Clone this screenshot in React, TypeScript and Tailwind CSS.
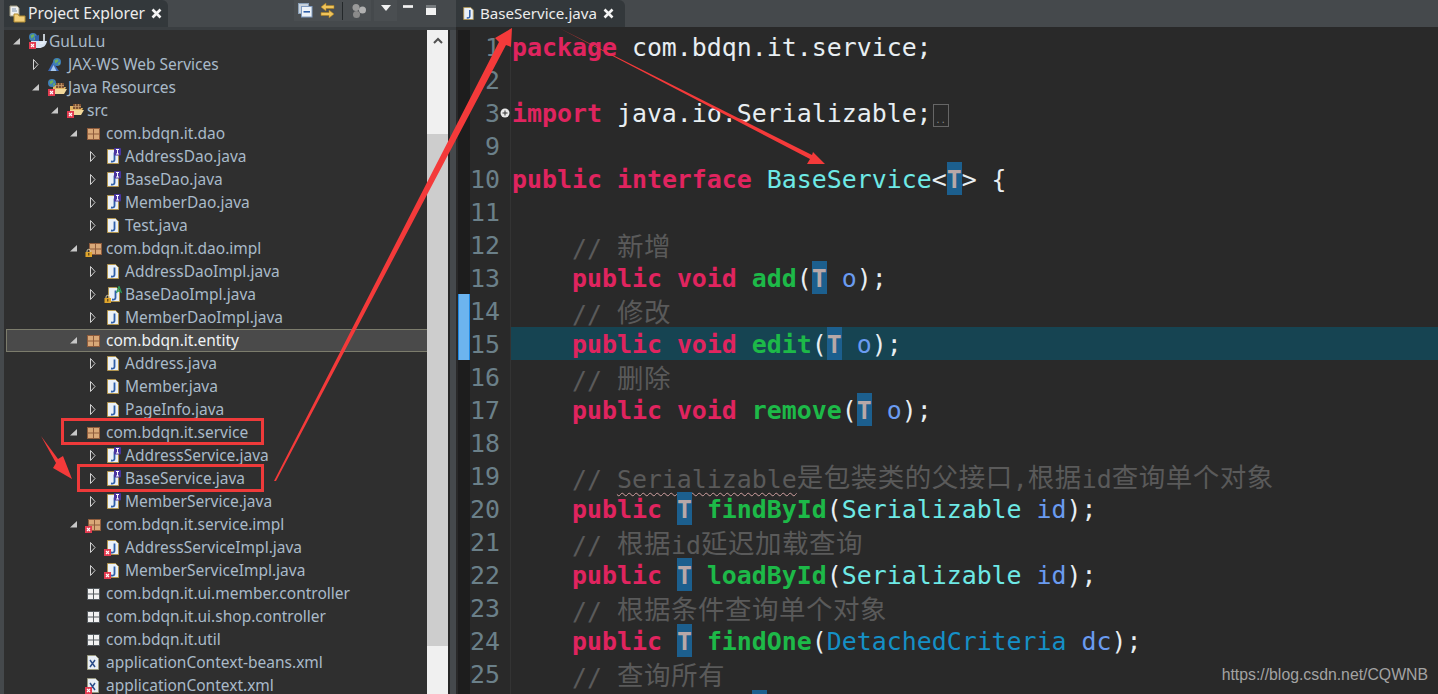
import { ReactNode } from 'react';

type IconKind = 'project' | 'jax' | 'jres' | 'src' | 'pkg' | 'pkgLock' | 'pkgErr' | 'pkgEmpty' | 'file' | 'fileI' | 'fileLockA' | 'fileErr' | 'xml' | 'xmlErr';
type TreeRow = { label: string; depth: number; arrow?: 'open' | 'closed'; icon: IconKind; selected?: boolean };

const depthClass = ['pl-[6px]', 'pl-[25px]', 'pl-[44px]', 'pl-[63px]', 'pl-[82px]'];

const rows: TreeRow[] = [
  { label: 'GuLuLu', depth: 0, arrow: 'open', icon: 'project' },
  { label: 'JAX-WS Web Services', depth: 1, arrow: 'closed', icon: 'jax' },
  { label: 'Java Resources', depth: 1, arrow: 'open', icon: 'jres' },
  { label: 'src', depth: 2, arrow: 'open', icon: 'src' },
  { label: 'com.bdqn.it.dao', depth: 3, arrow: 'open', icon: 'pkg' },
  { label: 'AddressDao.java', depth: 4, arrow: 'closed', icon: 'fileI' },
  { label: 'BaseDao.java', depth: 4, arrow: 'closed', icon: 'fileI' },
  { label: 'MemberDao.java', depth: 4, arrow: 'closed', icon: 'fileI' },
  { label: 'Test.java', depth: 4, arrow: 'closed', icon: 'file' },
  { label: 'com.bdqn.it.dao.impl', depth: 3, arrow: 'open', icon: 'pkgLock' },
  { label: 'AddressDaoImpl.java', depth: 4, arrow: 'closed', icon: 'file' },
  { label: 'BaseDaoImpl.java', depth: 4, arrow: 'closed', icon: 'fileLockA' },
  { label: 'MemberDaoImpl.java', depth: 4, arrow: 'closed', icon: 'file' },
  { label: 'com.bdqn.it.entity', depth: 3, arrow: 'open', icon: 'pkg', selected: true },
  { label: 'Address.java', depth: 4, arrow: 'closed', icon: 'file' },
  { label: 'Member.java', depth: 4, arrow: 'closed', icon: 'file' },
  { label: 'PageInfo.java', depth: 4, arrow: 'closed', icon: 'file' },
  { label: 'com.bdqn.it.service', depth: 3, arrow: 'open', icon: 'pkg' },
  { label: 'AddressService.java', depth: 4, arrow: 'closed', icon: 'fileI' },
  { label: 'BaseService.java', depth: 4, arrow: 'closed', icon: 'fileI' },
  { label: 'MemberService.java', depth: 4, arrow: 'closed', icon: 'fileI' },
  { label: 'com.bdqn.it.service.impl', depth: 3, arrow: 'open', icon: 'pkgErr' },
  { label: 'AddressServiceImpl.java', depth: 4, arrow: 'closed', icon: 'fileErr' },
  { label: 'MemberServiceImpl.java', depth: 4, arrow: 'closed', icon: 'fileErr' },
  { label: 'com.bdqn.it.ui.member.controller', depth: 3, icon: 'pkgEmpty' },
  { label: 'com.bdqn.it.ui.shop.controller', depth: 3, icon: 'pkgEmpty' },
  { label: 'com.bdqn.it.util', depth: 3, icon: 'pkgEmpty' },
  { label: 'applicationContext-beans.xml', depth: 3, icon: 'xml' },
  { label: 'applicationContext.xml', depth: 3, icon: 'xmlErr' },
];

// k keyword, m method, t type, c comment, p param, d dark blue type, w plain, g generic T
type Token = [string, 'k' | 'm' | 't' | 'c' | 'p' | 'd' | 'w' | 'g' | 'z' | 'u' | 'f'];

const tokenClass = {
  k: 'font-bold text-[#e0245f]',
  m: 'font-bold text-[#1db948]',
  t: 'text-[#6ee9e6]',
  c: 'text-[#5a5a5a]',
  p: 'text-[#6a9bf0]',
  d: 'text-[#1590c6]',
  w: 'text-[#e8eef2]',
  g: 'inline-block w-[15px] h-[33px] bg-[#1c5f8e] font-bold text-[#b8a8a8]',
  z: 'text-[#5a5a5a] text-[26.5px] leading-[33px] tracking-[0.5px] align-[1px] [font-family:"Noto_Sans_CJK_SC",sans-serif]',
  u: 'text-[#5a5a5a] underline decoration-wavy decoration-1 decoration-[#cfa0a0] underline-offset-4',
  f: 'inline-block w-[16px] h-[23px] ml-px align-middle border border-[#666666] text-[9px] leading-[30px] text-center text-[#888888]',
};

const code: { n: number; tokens: Token[]; active?: boolean; fold?: boolean; mark?: boolean }[] = [
  { n: 1, tokens: [['package', 'k'], [' com.bdqn.it.service;', 'w']] },
  { n: 2, tokens: [] },
  { n: 3, fold: true, tokens: [['import', 'k'], [' java.io.Serializable;', 'w'], ['..', 'f']] },
  { n: 9, tokens: [] },
  { n: 10, tokens: [['public', 'k'], [' ', 'w'], ['interface', 'k'], [' ', 'w'], ['BaseService', 't'], ['<', 'w'], ['T', 'g'], ['> {', 'w']] },
  { n: 11, tokens: [] },
  { n: 12, tokens: [['    // ', 'c'], ['新增', 'z']] },
  { n: 13, tokens: [['    ', 'w'], ['public', 'k'], [' ', 'w'], ['void', 'k'], [' ', 'w'], ['add', 'm'], ['(', 'w'], ['T', 'g'], [' ', 'w'], ['o', 'p'], [');', 'w']] },
  { n: 14, mark: true, tokens: [['    // ', 'c'], ['修改', 'z']] },
  { n: 15, mark: true, active: true, tokens: [['    ', 'w'], ['public', 'k'], [' ', 'w'], ['void', 'k'], [' ', 'w'], ['edit', 'm'], ['(', 'w'], ['T', 'g'], [' ', 'w'], ['o', 'p'], [');', 'w']] },
  { n: 16, tokens: [['    // ', 'c'], ['删除', 'z']] },
  { n: 17, tokens: [['    ', 'w'], ['public', 'k'], [' ', 'w'], ['void', 'k'], [' ', 'w'], ['remove', 'm'], ['(', 'w'], ['T', 'g'], [' ', 'w'], ['o', 'p'], [');', 'w']] },
  { n: 18, tokens: [] },
  { n: 19, tokens: [['    // ', 'c'], ['Serializable', 'u'], ['是包装类的父接口', 'z'], [',', 'c'], ['根据', 'z'], ['id', 'c'], ['查询单个对象', 'z']] },
  { n: 20, tokens: [['    ', 'w'], ['public', 'k'], [' ', 'w'], ['T', 'g'], [' ', 'w'], ['findById', 'm'], ['(', 'w'], ['Serializable', 't'], [' ', 'w'], ['id', 'p'], [');', 'w']] },
  { n: 21, tokens: [['    // ', 'c'], ['根据', 'z'], ['id', 'c'], ['延迟加载查询', 'z']] },
  { n: 22, tokens: [['    ', 'w'], ['public', 'k'], [' ', 'w'], ['T', 'g'], [' ', 'w'], ['loadById', 'm'], ['(', 'w'], ['Serializable', 't'], [' ', 'w'], ['id', 'p'], [');', 'w']] },
  { n: 23, tokens: [['    // ', 'c'], ['根据条件查询单个对象', 'z']] },
  { n: 24, tokens: [['    ', 'w'], ['public', 'k'], [' ', 'w'], ['T', 'g'], [' ', 'w'], ['findOne', 'm'], ['(', 'w'], ['DetachedCriteria', 'd'], [' ', 'w'], ['dc', 'p'], [');', 'w']] },
  { n: 25, tokens: [['    // ', 'c'], ['查询所有', 'z']] },
  { n: 26, tokens: [['    ', 'w'], ['public', 'k'], [' List<', 'w'], ['T', 'g'], ['> ', 'w'], ['findAll', 'm'], ['();', 'w']] },
];

function ErrBadge({ x, y }: { x: number; y: number }) {
  return (
    <g transform={`translate(${x} ${y})`}>
      <rect width="7" height="7" fill="#e23b50" />
      <path d="M2 2l3 3M5 2l-3 3" stroke="#fff" strokeWidth="1.1" />
    </g>
  );
}

function LockBadge({ x, y }: { x: number; y: number }) {
  return (
    <g transform={`translate(${x} ${y})`}>
      <path d="M2 3V2a1.7 1.7 0 0 1 3.4 0v1" fill="none" stroke="#d8c9a0" strokeWidth="1" />
      <rect x="0.5" y="3" width="6.5" height="5" fill="#e0a52c" />
      <rect x="3.3" y="4" width="1" height="2.5" fill="#3a2c10" />
    </g>
  );
}

function Doc({ x = 6 }: { x?: number }) {
  return (
    <g transform={`translate(${x} 1)`}>
      <path d="M.5.5h8l3 3v11H.5z" fill="#eaf1f8" stroke="#b3964f" />
      <path d="M7.5 3.5v7.2c0 1.5-1.2 2.2-3.5 1.8" fill="none" stroke="#2f5fa8" strokeWidth="1.8" />
    </g>
  );
}

function Squares({ fill, line, x = 5 }: { fill: string; line: string; x?: number }) {
  return (
    <g transform={`translate(${x} 3)`}>
      <rect width="13" height="12" fill={line} />
      <rect x="1" y="1" width="5" height="4.5" fill={fill} />
      <rect x="7" y="1" width="5" height="4.5" fill={fill} />
      <rect x="1" y="6.5" width="5" height="4.5" fill={fill} />
      <rect x="7" y="6.5" width="5" height="4.5" fill={fill} />
    </g>
  );
}

function Globe({ x, y }: { x: number; y: number }) {
  return (
    <g transform={`translate(${x} ${y})`}>
      <circle cx="4" cy="4" r="4" fill="#3f7fb8" />
      <path d="M1.5 2.5l3-1.5 1 2-3 2.5zM5 5l2-1v2l-1.5 1z" fill="#6fb05a" />
    </g>
  );
}

function OpenFolder({ x, y }: { x: number; y: number }) {
  return (
    <g transform={`translate(${x} ${y})`}>
      <path d="M1 2h7l1 2h5l-3 7H1z" fill="#e2b664" />
      <path d="M1 6h14l-3 5H1z" fill="#f1d79a" />
      <rect x="4" y="0" width="8" height="5" fill="#7c5233" />
      <path d="M6.5 0v5M9.5 0v5M4 2.5h8" stroke="#c89a6a" strokeWidth="0.8" />
    </g>
  );
}

function TreeIcon({ kind }: { kind: IconKind }) {
  let body: ReactNode = null;
  if (kind === 'project') {
    body = (
      <>
        <path d="M6 8h16c-1 5-4 7-8 7H6z" fill="#d8e4f2" />
        <path d="M19 1v7c0 2-2 3-4 2" fill="none" stroke="#e8f0f8" strokeWidth="1.6" />
        <Globe x={4} y={0} />
        <path d="M10 3l4-1v6h-4z" fill="#2f5fa8" />
        <ErrBadge x={4} y={9} />
      </>
    );
  } else if (kind === 'jax') {
    body = (
      <>
        <path d="M4 15l5-9 6 9z" fill="#3a68b8" />
        <path d="M6.5 15l3-6 3 6z" fill="#a8c8ec" />
        <Globe x={9} y={2} />
      </>
    );
  } else if (kind === 'jres') {
    body = (
      <>
        <OpenFolder x={8} y={4} />
        <Globe x={4} y={0} />
        <ErrBadge x={4} y={10} />
      </>
    );
  } else if (kind === 'src') {
    body = (
      <>
        <OpenFolder x={6} y={2} />
        <ErrBadge x={4} y={9} />
      </>
    );
  } else if (kind === 'pkg') {
    body = <Squares fill="#d9a878" line="#8f5c3c" />;
  } else if (kind === 'pkgLock') {
    body = (
      <>
        <Squares fill="#d9a878" line="#8f5c3c" x={7} />
        <LockBadge x={3} y={9} />
      </>
    );
  } else if (kind === 'pkgErr') {
    body = (
      <>
        <Squares fill="#d9a878" line="#8f5c3c" x={6} />
        <ErrBadge x={3} y={10} />
      </>
    );
  } else if (kind === 'pkgEmpty') {
    body = <Squares fill="#f2f2f2" line="#555a5e" />;
  } else if (kind === 'file') {
    body = <Doc />;
  } else if (kind === 'fileI') {
    body = (
      <>
        <Doc />
        <rect x="13" y="0" width="7" height="7.5" rx="1" fill="#4a35a0" />
        <path d="M15 1.5h3M16.5 1.5v4.5M15 6h3" stroke="#fff" strokeWidth="1" />
      </>
    );
  } else if (kind === 'fileLockA') {
    body = (
      <>
        <Doc x={7} />
        <path d="M15.5 7l2.5-6.5 2.5 6.5M16.5 5h3" fill="none" stroke="#2a9a58" strokeWidth="1.3" />
        <LockBadge x={3} y={9} />
      </>
    );
  } else if (kind === 'fileErr') {
    body = (
      <>
        <Doc />
        <ErrBadge x={3} y={10} />
      </>
    );
  } else {
    body = (
      <>
        <g transform="translate(5 1)">
          <path d="M.5.5h8l3 3v11H.5z" fill="#e8eef4" stroke="#9a9a80" />
          <path d="M3 5l5 7M8 5l-5 7" stroke="#2c4f8a" strokeWidth="1.5" />
        </g>
        {kind === 'xmlErr' && <ErrBadge x={3} y={10} />}
      </>
    );
  }
  return (
    <svg width="24" height="18" viewBox="0 0 24 18" className="shrink-0">
      {body}
    </svg>
  );
}

function Twisty({ open }: { open: boolean }) {
  return (
    <svg width="15" height="15" viewBox="0 0 15 15" className="shrink-0">
      {open ? (
        <path d="M3 10.5L10 4v6.5z" fill="#c8c8c8" />
      ) : (
        <path d="M4.5 2.5l4.5 5-4.5 5z" fill="#2f2f2f" stroke="#d4d4d4" />
      )}
    </svg>
  );
}

function CloseIcon() {
  return (
    <svg width="11" height="11" viewBox="0 0 11 11" className="shrink-0">
      <path d="M1.5 1.5l8 8M9.5 1.5l-8 8" stroke="#f4f4f4" strokeWidth="2.6" />
    </svg>
  );
}

function ExplorerToolbar() {
  return (
    <div className="flex items-start ml-[126px]">
      <div className="flex items-center w-[77px] h-[21px] bg-[#4a4e51] pl-[4px]">
        <svg width="15" height="15" viewBox="0 0 15 15">
          <rect x="0.5" y="0.5" width="10" height="10" fill="#c8d2dc" stroke="#8aa0b8" />
          <rect x="3.5" y="3.5" width="10.5" height="10.5" fill="#eef3f8" stroke="#7f9ac0" />
          <rect x="5.5" y="8" width="6.5" height="1.6" fill="#2f5fa8" />
        </svg>
        <svg width="17" height="17" viewBox="0 0 17 17" className="ml-[6px]">
          <path d="M7 1L2 5l5 4V6.5h8v-3H7z" fill="#f0c45a" stroke="#a87c20" strokeWidth="0.6" />
          <path d="M10 8l5 4-5 4v-2.5H2v-3h8z" fill="#f0c45a" stroke="#a87c20" strokeWidth="0.6" />
        </svg>
        <span className="ml-[6px] w-px h-[18px] bg-[#24282a]" />
        <svg width="16" height="16" viewBox="0 0 16 16" className="ml-[8px]">
          <circle cx="5" cy="4.5" r="3.5" fill="#9a9a9a" />
          <circle cx="11.5" cy="7" r="3.5" fill="#b0b0b0" />
          <circle cx="5.5" cy="11.5" r="3.5" fill="#8a8a8a" />
        </svg>
      </div>
      <div className="flex justify-center w-[23px] h-[21px] bg-[#4a4e51] ml-[3px] pt-[5px]">
        <svg width="10" height="6" viewBox="0 0 10 6">
          <path d="M0 0h10L5 6z" fill="#f2f2f2" />
        </svg>
      </div>
      <span className="ml-[6px] mt-[5px] w-[10px] h-[3px] bg-[#f2f2f2] border-y border-[#d8d8d8]" />
      <span className="ml-[13px] mt-[5px] w-[10px] h-[10px] bg-[#f2f2f2] border-t-[3px] border-[#777b7e]" />
    </div>
  );
}

function ScrollBar() {
  return (
    <div className="flex flex-col w-[21px] bg-[#f0f0f0]">
      <div className="flex justify-center h-[104px] pt-[7px]">
        <svg width="10" height="7" viewBox="0 0 10 7">
          <path d="M1 6l4-4 4 4" fill="none" stroke="#505050" strokeWidth="2" />
        </svg>
      </div>
      <div className="h-[512px] bg-[#cdcdcd]" />
    </div>
  );
}

function Explorer() {
  return (
    <div className="flex flex-col w-[456px] h-full shrink-0 pl-[4px]">
      <div className="flex h-[27px] shrink-0">
        <div className="flex items-center w-[164px] bg-[#33383b] rounded-tr-[6px] text-[15.7px] leading-none text-[#ececec] pl-[3px]">
          <svg width="20" height="18" viewBox="0 0 20 18" className="shrink-0">
            <path d="M3 1h7l2 2v8H3z" fill="#f0f0f0" stroke="#a09a80" />
            <path d="M5 4h4M5 6h5" stroke="#7f95b0" />
            <path d="M7 9h4l1 2h6v6H7z" fill="#f2cf7a" stroke="#b08a30" />
          </svg>
          <span className="ml-[1px]">Project Explorer</span>
          <span className="ml-[6px] flex">
            <CloseIcon />
          </span>
        </div>
        <ExplorerToolbar />
      </div>
      <div className="h-[3px] shrink-0 bg-[#3a3e41]" />
      <div className="flex flex-1 min-h-0 w-[446px] bg-[#2f2f2f]">
        <div className="flex-1 overflow-hidden">
          {rows.map((r) => (
            <div
              key={r.label}
              className={`flex items-center h-[23px] whitespace-nowrap text-[15.5px] ${depthClass[r.depth]} ${
                r.selected ? 'bg-[#4a4a4a] border border-[#7c7c6c] ml-[2px] -mr-px text-[#eef2f4]' : 'text-[#a9bac9]'
              }`}
            >
              <span className={`flex w-[15px] shrink-0 ${r.selected ? '-ml-[3px]' : ''}`}>
                {r.arrow && <Twisty open={r.arrow === 'open'} />}
              </span>
              <TreeIcon kind={r.icon} />
              <span>{r.label}</span>
            </div>
          ))}
        </div>
        <ScrollBar />
        <span className="w-[2px] bg-[#262626]" />
      </div>
    </div>
  );
}

function Editor() {
  return (
    <div className="flex flex-col flex-1 min-w-0 h-full">
      <div className="flex h-[27px] shrink-0">
        <div className="flex items-center w-[169px] bg-[#33383b] rounded-tr-[6px] text-[15.1px] leading-none text-[#ececec] pl-[7px]">
          <svg width="11" height="13" viewBox="0 0 12 15" className="shrink-0">
            <path d="M.5.5h8l3 3v11H.5z" fill="#eaf1f8" stroke="#b3964f" />
            <path d="M7.5 3.5v7.2c0 1.5-1.2 2.2-3.5 1.8" fill="none" stroke="#2f5fa8" strokeWidth="1.8" />
          </svg>
          <span className="ml-[6px]">BaseService.java</span>
          <span className="ml-[6px] flex">
            <CloseIcon />
          </span>
        </div>
      </div>
      <div className="flex flex-col flex-1 min-h-0 overflow-hidden bg-[#292929] pt-[3px] [font-family:'DejaVu_Sans_Mono',monospace] text-[24.9px] leading-[35px]">
        {code.map((line) => (
          <div key={line.n} className="flex h-[33px] shrink-0">
            <span className={`w-[12px] ml-[2px] shrink-0 ${line.mark ? 'bg-[#6db4ee] border-x border-[#1e8ae6]' : 'bg-[#1d1d1d]'}`} />
            <span className="w-[30px] shrink-0 text-right text-[#6b8089]">{line.n}</span>
            <span className="flex items-center justify-center w-[10px] shrink-0">
              {line.fold && (
                <svg width="10" height="10" viewBox="0 0 10 10">
                  <circle cx="5" cy="5" r="4.5" fill="#e8e8e8" />
                  <path d="M2.5 5h5M5 2.5v5" stroke="#303030" />
                </svg>
              )}
            </span>
            <span className="w-px shrink-0 bg-[#333333]" />
            <div className={`flex-1 pl-px whitespace-pre ${line.active ? 'bg-[#164452]' : ''}`}>
              {line.tokens.map((t, i) => (
                <span key={i} className={tokenClass[t[1]]}>
                  {t[0]}
                </span>
              ))}
            </div>
          </div>
        ))}
      </div>
    </div>
  );
}

export default function App() {
  return (
    <div className="relative flex w-[1438px] h-[694px] overflow-hidden bg-[#45494c] font-['Noto_Sans',sans-serif]">
      <Explorer />
      <Editor />
      {/* annotations drawn on top of the screenshot */}
      <div className="absolute left-[61px] top-[418px] w-[203px] h-[27px] border-[3px] border-[#ee3a3a]" />
      <div className="absolute left-[77px] top-[464px] w-[187px] h-[28px] border-[3px] border-[#ee3a3a]" />
      <svg className="absolute inset-0 pointer-events-none" width="1438" height="694" viewBox="0 0 1438 694">
        <polygon points="274,481 499,42 495,38 512,28 511,47 506,45 276,481" fill="#f43a3a" />
        <polygon points="559,28 812,155 813,152 825,164 807,164 810,159" fill="#f43a3a" />
        <polygon points="41,436 58,459 63,456 72,479 53,468 56,463" fill="#f43a3a" />
      </svg>
      <span className="absolute right-[10px] top-[664px] text-[15.8px] leading-[22px] text-[#a3a3a3] font-['Liberation_Sans',sans-serif]">
        https://blog.csdn.net/CQWNB
      </span>
    </div>
  );
}
